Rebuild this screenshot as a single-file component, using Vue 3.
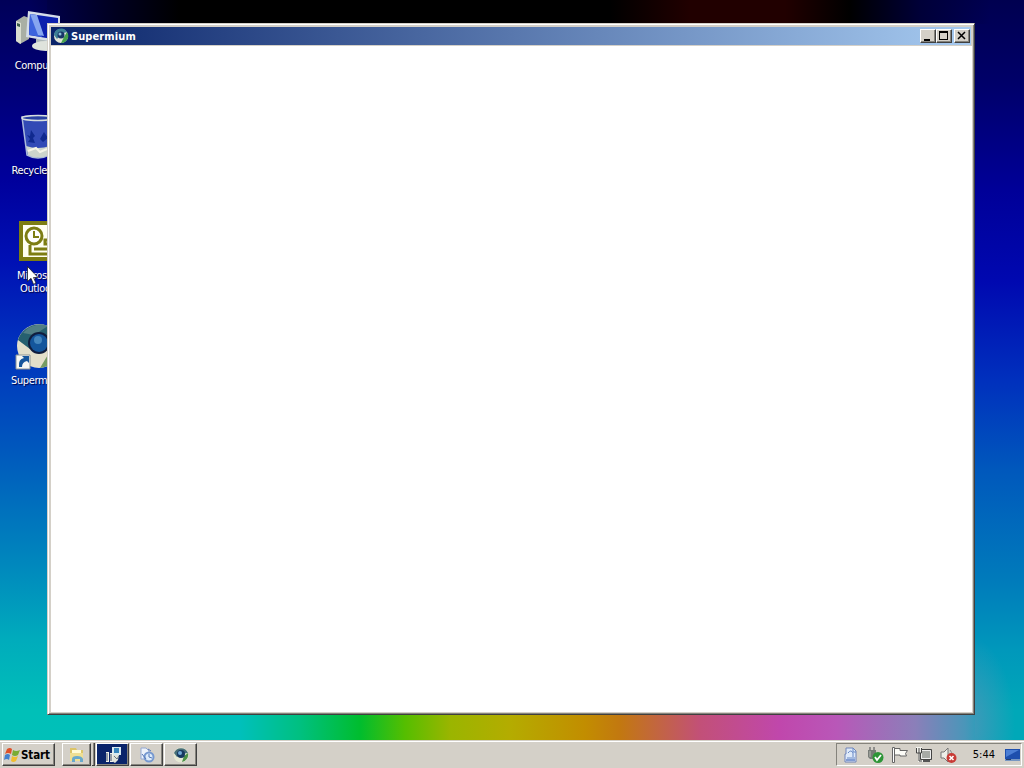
<script setup>
import { ref } from 'vue'

const shortcuts = [
  { id: 'computer', label: 'Computer' },
  { id: 'recycle', label: 'Recycle Bin' },
  { id: 'outlook', label: 'Microsoft Outlook' },
  { id: 'supermium', label: 'Supermium' },
]

const open = ref(true)
const clock = ref('5:44')
</script>

<template>
  <div class="desktop">
    <div class="shortcuts">
      <div v-for="item in shortcuts" :key="item.id" class="shortcut">
        <svg v-if="item.id === 'computer'" width="48" height="48" viewBox="0 0 48 48">
          <path d="M2 13l8-5 5 2v21l-9 5-4-3z" fill="#a9afa4" />
          <path d="M2 13l5 2v21l-5-3z" fill="#d9ddcf" />
          <path d="M3 15l3 1v3l-3-1z" fill="#3b5a48" />
          <path d="M22 31h14v7H22z" fill="#aeb8b9" />
          <ellipse cx="32" cy="38" rx="14" ry="5" fill="#dfe3dc" />
          <path d="M14 3l32 5v27l-34-6z" fill="#d5dde8" />
          <path d="M16 6l28 4v22l-29-5z" fill="#0c20ad" />
          <path d="M16 6l-1 21 13 2z" fill="#3c63dd" />
          <path d="M16 6l7 1 7 21-6-1z" fill="#86a6f0" />
        </svg>
        <svg v-else-if="item.id === 'recycle'" width="48" height="48" viewBox="0 0 48 48">
          <path d="M8 4l32 0-5 38q-11 6-22 0z" fill="#3f5cc0" fill-opacity=".8" stroke="#a9b9dc" stroke-width="1.500" />
          <path d="M12 33q12 4 24 0l-1 9q-11 5-21 0z" fill="#cdd5cc" />
          <path d="M14 38l8-3 4 4 7-3" fill="none" stroke="#f5f4e6" stroke-width="2" />
          <ellipse cx="24" cy="5" rx="16" ry="2.500" fill="#2841a2" stroke="#d7dfdf" stroke-width="1.500" />
          <path d="M17 17l4 6-2 2 2 5-7-1 2-3-3-4 3 1zM30 19l4 6-5 4-3-3z" fill="#10298f" />
        </svg>
        <svg v-else-if="item.id === 'outlook'" width="48" height="48" viewBox="0 0 48 48">
          <path d="M5 3h40v40H5z" fill="#7d7d13" />
          <path d="M9 7h34v32H9z" fill="#fffff2" />
          <circle cx="20" cy="18" r="8" fill="#fff" stroke="#7d7d13" stroke-width="3" />
          <path d="M20 13v6h5" fill="none" stroke="#7d7d13" stroke-width="2" />
          <path d="M16 27v9h24V22h-9v4h6M20 31h13" fill="none" stroke="#7d7d13" stroke-width="3" />
        </svg>
        <svg v-else width="48" height="48" viewBox="0 0 48 48">
          <circle cx="25" cy="23" r="22" fill="#e3dfca" />
          <path d="M4 17a22 22 0 0 1 42 0l-14 1-16 8z" fill="#26606f" />
          <path d="M9 10a22 22 0 0 1 25-7L20 12z" fill="#527f85" />
          <path d="M46 18a22 22 0 0 1-20 27l9-15z" fill="#759c63" />
          <circle cx="25" cy="20" r="11" fill="#101d3e" />
          <circle cx="25" cy="20" r="9" fill="#14569c" />
          <circle cx="24" cy="17" r="4" fill="#4486bd" />
          <path d="M2 32h14v14H2z" fill="#f7f8f5" stroke="#8c9494" />
          <path d="M5 44q-1-8 5-9l-2-2h7v7l-2-2q-5 1-5 6z" fill="#17569c" />
        </svg>
        <span>{{ item.label }}</span>
      </div>
    </div>

    <div v-if="open" class="window">
      <div class="titlebar">
        <svg width="16" height="16" viewBox="0 0 16 16">
          <circle cx="8" cy="8" r="7" fill="#e1e5d7" />
          <path d="M1 7a7 7 0 0 1 13-3L8 6l-4 5z" fill="#3b7f94" />
          <path d="M14 4a7 7 0 0 1-6 11l3-6z" fill="#45a14c" />
          <circle cx="8" cy="7" r="3.500" fill="#183568" />
          <circle cx="7" cy="6" r="1.500" fill="#8bc3dc" />
        </svg>
        <span class="title">Supermium</span>
        <div class="controls">
          <button>
            <svg width="14" height="12" viewBox="0 0 14 12"><path d="M3 9h6v2H3z" /></svg>
          </button>
          <button>
            <svg width="14" height="12" viewBox="0 0 14 12"><path d="M2 1h9v9H2zM3 3v6h7V3z" fill-rule="evenodd" /></svg>
          </button>
          <button class="close" @click="open = false">
            <svg width="14" height="12" viewBox="0 0 14 12"><path d="M3 2l7 7M10 2l-7 7" stroke="#000" stroke-width="1.500" /></svg>
          </button>
        </div>
      </div>
      <div class="client"></div>
    </div>

    <div class="taskbar">
      <button class="start">
        <svg width="17" height="16" viewBox="0 0 17 16">
          <path d="M3 2q3-2 5 0L7 7Q4 5 1 7z" fill="#df5129" />
          <path d="M9 3q3 2 7 0l-2 5q-3 2-6 0z" fill="#79ac34" />
          <path d="M1 8q3-2 5 0l-1 5q-2-2-5 0z" fill="#4381ce" />
          <path d="M8 9q3 2 6 0l-2 5q-3 2-5 0z" fill="#f0bd2e" />
        </svg>
        <span>Start</span>
      </button>
      <div class="tasks">
        <button class="task explorer">
          <svg width="16" height="16" viewBox="0 0 16 16">
            <path d="M1 1h6l1 2h6v11H1z" fill="#dcc467" />
            <path d="M3 3h9v5H3z" fill="#fffbd5" />
            <path d="M1 6h13v8H1z" fill="#efdf92" />
            <path d="M3 15v-3q0-3 5-3t6 3v3h-3v-3H6v3z" fill="#68a9cc" />
          </svg>
        </button>
        <span class="stack"></span>
        <button class="task active">
          <svg width="16" height="16" viewBox="0 0 16 16">
            <path d="M7 0h9v8H7z" fill="#d7e8ef" />
            <path d="M9 1h5v5H9z" fill="#3786bd" />
            <path d="M1 5h3v10H1zM5 6h3v9H5z" fill="#f1f1e9" />
            <path d="M2 6v8M6 7v7" stroke="#344565" />
            <path d="M8 8h6l-1 5-3 3-3-2z" fill="#dfe2da" />
            <path d="M9 9l3 3 2-3" fill="none" stroke="#667582" />
          </svg>
        </button>
        <button class="task">
          <svg width="16" height="16" viewBox="0 0 16 16">
            <path d="M2 1h5l3 3v8H2z" fill="#edf2fa" stroke="#93a8d2" />
            <circle cx="10" cy="10" r="4.500" fill="#dceafa" stroke="#7698d0" stroke-width="2" />
            <path d="M10 7v3l3 1M3 7l4 5M9 2l3 2" fill="none" stroke="#5578b8" />
          </svg>
        </button>
        <button class="task">
          <svg width="16" height="16" viewBox="0 0 16 16">
            <circle cx="8" cy="8" r="7.500" fill="#e6e8d4" />
            <path d="M1 6a7.500 7.500 0 0 1 14 0L8 7l-4 3z" fill="#476f78" />
            <path d="M15 6a7.500 7.500 0 0 1-6 9l2-6z" fill="#4c9247" />
            <circle cx="8" cy="7" r="4" fill="#173961" />
            <circle cx="7" cy="6" r="2" fill="#70a8d5" />
          </svg>
        </button>
      </div>
      <div class="tray">
        <svg width="16" height="16" viewBox="0 0 16 16">
          <path d="M3 1h7l3 3v11H2V7h1z" fill="#dfeafa" stroke="#7084b8" />
          <path d="M10 1v4h3M4 11h8M5 6q3-4 5 0v4" fill="none" stroke="#6688c5" />
          <path d="M3 12h9v2H3z" fill="#819cd3" />
        </svg>
        <svg width="17" height="16" viewBox="0 0 17 16">
          <path d="M3 0v4M7 0v4" stroke="#777" stroke-width="1.500" />
          <path d="M1 3h8v7l-2 2H3l-2-2z" fill="#777c77" />
          <path d="M3 4v6" stroke="#b8bbb5" />
          <circle cx="11" cy="10.500" r="5.500" fill="#2d9537" />
          <path d="M8 10l2 3 4-5" fill="none" stroke="#fff" stroke-width="1.800" />
        </svg>
        <svg width="16" height="16" viewBox="0 0 16 16">
          <path d="M.5.5h2v15h-2z" fill="#fff" stroke="#666" />
          <path d="M2.500 1.500H8v2h7.500l-2 3 1 2.500H8V8H2.500z" fill="#fcfcf7" stroke="#666" />
        </svg>
        <svg width="16" height="16" viewBox="0 0 16 16">
          <path d="M4.500 2.500h11v10h-11z" fill="#a7aaa6" stroke="#444" />
          <path d="M5.500 3.500h9v8h-9z" fill="none" stroke="#eee" />
          <path d="M7 14h7" stroke="#555" stroke-width="2" />
          <path d="M0 0h6v6H4v7h3v2H2V6H0z" fill="#f3f3ee" />
          <path d="M.5 1v5h5V1M3 1v5M3 6v8h3" fill="none" stroke="#444" />
        </svg>
        <svg width="18" height="16" viewBox="0 0 18 16">
          <path d="M1 5h3l4-4v14l-4-4H1z" fill="#eeeee8" stroke="#777" />
          <path d="M10 3q2 2 2 5" fill="none" stroke="#888" />
          <circle cx="11.500" cy="11" r="5" fill="#c83a35" />
          <path d="M9.500 9l4 4m0-4l-4 4" stroke="#fff" stroke-width="1.600" />
        </svg>
        <span class="clock">{{ clock }}</span>
        <svg width="16" height="16" viewBox="0 0 16 16">
          <path d="M0 2h15v10H0z" fill="#1e4fad" />
          <path d="M1 3h13L1 10z" fill="#4b7ed4" />
          <path d="M0 12h15v2H0z" fill="#7897c2" />
          <path d="M1 12h5v1H1z" fill="#263f70" />
        </svg>
      </div>
    </div>

    <svg class="cursor" width="12" height="20" viewBox="0 0 12 20">
      <path d="M.5 .5v15l3.500-3.300 2.500 6 2.500-1-2.500-5.700H11z" fill="#fff" stroke="#111" stroke-width=".7" />
    </svg>
  </div>
</template>

<style>
body {
  margin: 0;
  overflow: hidden;
}
</style>

<style scoped>
.desktop {
  position: relative;
  display: flex;
  flex-direction: column;
  width: 1024px;
  height: 768px;
  overflow: hidden;
  font-family: 'DejaVu Sans Condensed', 'DejaVu Sans', sans-serif;
  font-stretch: condensed;
  font-size: 11px;
  background:
    linear-gradient(90deg, transparent 30px, #000020 115px, #000 180px, #000 610px, #210000 690px, #210000 785px, #000 850px, #000038 920px, transparent 990px) 0 0 / 100% 24px no-repeat,
    linear-gradient(90deg, #00c0b8 0, #00c0bb 240px, #00c080 300px, #00bd2e 360px, #55be00 405px, #9ab500 450px, #b4ac00 510px, #c28d00 585px, #c27810 620px, #c25078 700px, #c047ac 780px, #b957b8 836px, #8b7fb9 915px, #4a96b9 965px, #00a8b9 1000px) 0 715px / 975px 26px no-repeat,
    radial-gradient(ellipse 50px 90px at 965px 725px, #4a96b9, transparent),
    linear-gradient(#000058 0, #000078 90px, #00009c 180px, #0010b4 260px, #0030bd 340px, #0058bd 450px, #008abd 570px, #00acbc 640px, #00c0b8 710px) 0 0 / 47px 100% no-repeat,
    linear-gradient(#000050 0, #000068 80px, #000098 190px, #0008b0 280px, #0030bd 380px, #0058bc 470px, #007bbb 580px, #0098bb 650px, #00a8b8 710px);
}

.shortcuts {
  flex: 1;
  display: flex;
  flex-direction: column;
  align-items: flex-start;
}

.shortcut {
  display: flex;
  flex-direction: column;
  align-items: center;
  gap: 3px;
  box-sizing: border-box;
  width: 76px;
  height: 105px;
  padding-top: 8px;
  color: #fff;
  line-height: 13px;
  text-align: center;
  text-shadow: 1px 1px 1px #000040;
}

.shortcut span {
  max-width: 70px;
  letter-spacing: -0.35px;
}

.window {
  position: absolute;
  left: 47px;
  top: 23px;
  display: flex;
  flex-direction: column;
  box-sizing: border-box;
  width: 928px;
  height: 692px;
  padding: 3px 1px 1px 3px;
  border: 1px solid;
  border-color: #d4d0c8 #404040 #404040 #d4d0c8;
  background: #d4d0c8;
  box-shadow: inset 1px 1px #fff, inset -1px -1px #85837c;
}

.titlebar {
  display: flex;
  align-items: center;
  box-sizing: border-box;
  height: 18px;
  margin-right: 2px;
  padding: 0 1px 0 2px;
  background: linear-gradient(90deg, #0a246a, #a6caf0);
  color: #fff;
}

.title {
  flex: 1;
  padding-left: 2px;
  font-weight: bold;
  letter-spacing: 0.1px;
}

.controls {
  display: flex;
}

button {
  box-sizing: border-box;
  display: flex;
  align-items: center;
  margin: 0;
  padding: 0;
  border: 1px solid;
  border-color: #fff #404040 #404040 #fff;
  background: #d4d0c8;
  box-shadow: inset -1px -1px #85837c;
  color: #000;
  font: inherit;
}

.controls button {
  width: 16px;
  height: 14px;
}

.controls .close {
  margin-left: 2px;
}

.client {
  flex: 1;
  margin-top: 1px;
  margin-right: 1px;
  margin-bottom: 1px;
  background: #fff;
}

.taskbar {
  display: flex;
  box-sizing: border-box;
  height: 28px;
  padding: 2px 2px 2px;
  border-top: 1px solid #d4d0c8;
  background: #d4d0c8;
  box-shadow: inset 0 1px #fff;
}

.start {
  width: 53px;
  height: 23px;
  padding-left: 1px;
  font-size: 11.5px;
  font-weight: bold;
  letter-spacing: -0.1px;
}

.tasks {
  display: flex;
  flex: 1;
  padding-left: 7px;
}

.task {
  justify-content: center;
  width: 33px;
  height: 23px;
  margin-right: 1px;
}

.explorer {
  width: 29px;
}

.stack {
  box-sizing: border-box;
  width: 3px;
  height: 23px;
  margin-right: 1px;
  border-right: 1px solid #404040;
  border-bottom: 1px solid #404040;
  box-shadow: inset -1px 0 #85837c;
}

.active {
  background: #0a246a;
}

.tray {
  display: flex;
  align-items: center;
  box-sizing: border-box;
  width: 186px;
  height: 23px;
  padding-left: 6px;
  gap: 8px;
  border: 1px solid;
  border-color: #85837c #fff #fff #85837c;
}

.tray svg {
  flex: none;
}

.clock {
  margin-left: auto;
  margin-right: 2px;
}
.cursor {
  position: absolute;
  left: 27px;
  top: 266px;
}
</style>
